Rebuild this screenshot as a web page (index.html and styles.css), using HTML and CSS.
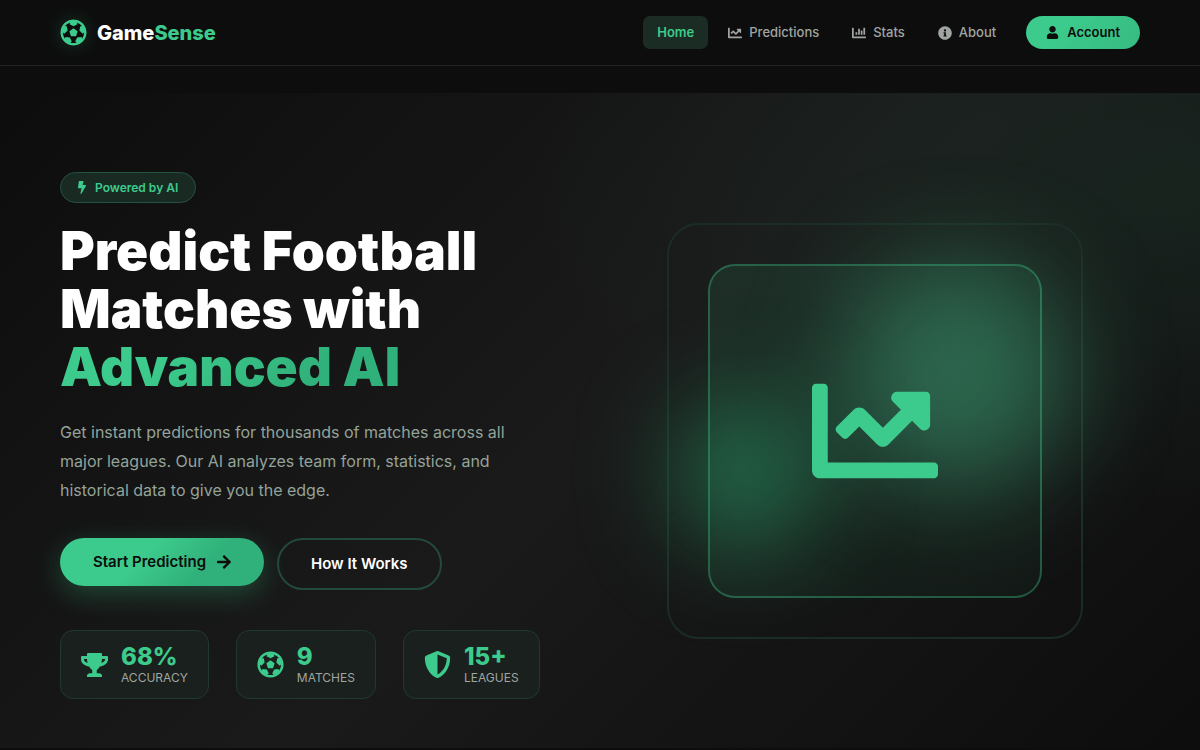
FILE: index.html
```html
<!DOCTYPE html>
<html lang="en">
<head>
<meta charset="utf-8">
<meta name="viewport" content="width=device-width, initial-scale=1">
<title>GameSense</title>
<link rel="stylesheet" href="styles.css">
</head>
<body>
<svg class="sprite" aria-hidden="true">
  <symbol id="ball" viewBox="0 0 512 512"><path d="M504 256c0 136.967-111.033 248-248 248S8 392.967 8 256 119.033 8 256 8s248 111.033 248 248zm-48 0l-.003-.282-26.064 22.741-62.679-58.5 16.454-84.355 34.303 3.072c-24.889-34.216-60.004-60.089-100.709-73.141l13.651 31.939L256 139l-74.953-41.525 13.651-31.939c-40.631 13.028-75.78 38.87-100.709 73.141l34.565-3.073 16.192 84.355-62.678 58.5-26.064-22.741-.003.282c0 43.015 13.497 83.952 38.472 117.991l7.704-33.897 85.138 10.447 36.301 77.826-29.902 17.786c40.202 13.122 84.29 13.148 124.572 0l-29.902-17.786 36.301-77.826 85.138-10.447 7.704 33.897C442.503 339.952 456 299.015 456 256zm-248.102 69.571l-29.894-91.312L256 177.732l77.996 56.527-29.622 91.312h-96.476z"/></symbol>
  <symbol id="line" viewBox="0 0 512 512"><path d="M496 384H64V80c0-8.84-7.16-16-16-16H16C7.16 64 0 71.16 0 80v336c0 17.67 14.33 32 32 32h464c8.84 0 16-7.16 16-16v-32c0-8.84-7.16-16-16-16zM464 96H345.94c-21.38 0-32.09 25.85-16.97 40.97l32.4 32.4L288 242.75l-73.37-73.37c-12.5-12.5-32.76-12.5-45.25 0l-68.69 68.69c-6.25 6.25-6.25 16.38 0 22.63l22.62 22.62c6.25 6.25 16.38 6.25 22.63 0L192 237.25l73.37 73.37c12.5 12.5 32.76 12.5 45.25 0l96-96 32.4 32.4c15.12 15.12 40.97 4.41 40.97-16.97V112c.01-8.84-7.15-16-15.99-16z"/></symbol>
  <symbol id="bars" viewBox="0 0 512 512"><path d="M332.8 320h38.4c6.4 0 12.8-6.4 12.8-12.8V172.8c0-6.4-6.4-12.8-12.8-12.8h-38.4c-6.4 0-12.8 6.4-12.8 12.8v134.4c0 6.4 6.4 12.8 12.8 12.8zm96 0h38.4c6.4 0 12.8-6.4 12.8-12.8V76.8c0-6.4-6.4-12.8-12.8-12.8h-38.4c-6.4 0-12.8 6.4-12.8 12.8v230.4c0 6.4 6.4 12.8 12.8 12.8zm-288 0h38.4c6.4 0 12.8-6.4 12.8-12.8v-70.4c0-6.4-6.4-12.8-12.8-12.8h-38.4c-6.4 0-12.8 6.4-12.8 12.8v70.4c0 6.4 6.4 12.8 12.8 12.8zm96 0h38.4c6.4 0 12.8-6.4 12.8-12.8V108.8c0-6.4-6.4-12.8-12.8-12.8h-38.4c-6.4 0-12.8 6.4-12.8 12.8v198.4c0 6.4 6.4 12.8 12.8 12.8zM496 384H64V80c0-8.84-7.16-16-16-16H16C7.16 64 0 71.16 0 80v336c0 17.67 14.33 32 32 32h464c8.84 0 16-7.16 16-16v-32c0-8.84-7.16-16-16-16z"/></symbol>
  <symbol id="info" viewBox="0 0 512 512"><path d="M256 8C119.043 8 8 119.083 8 256c0 136.997 111.043 248 248 248s248-111.003 248-248C504 119.083 392.957 8 256 8zm0 110c23.196 0 42 18.804 42 42s-18.804 42-42 42-42-18.804-42-42 18.804-42 42-42zm56 254c0 6.627-5.373 12-12 12h-88c-6.627 0-12-5.373-12-12v-24c0-6.627 5.373-12 12-12h12v-64h-12c-6.627 0-12-5.373-12-12v-24c0-6.627 5.373-12 12-12h64c6.627 0 12 5.373 12 12v100h12c6.627 0 12 5.373 12 12v24z"/></symbol>
  <symbol id="user" viewBox="0 0 448 512"><path d="M224 256c70.7 0 128-57.3 128-128S294.7 0 224 0 96 57.3 96 128s57.3 128 128 128zm89.6 32h-16.7c-22.2 10.2-46.9 16-72.9 16s-50.6-5.8-72.9-16h-16.7C60.2 288 0 348.2 0 422.4V464c0 26.5 21.5 48 48 48h352c26.5 0 48-21.5 48-48v-41.6c0-74.2-60.2-134.4-134.4-134.4z"/></symbol>
  <symbol id="bolt" viewBox="0 0 320 512"><path d="M296 160H180.6l42.6-129.8C227.2 15 215.7 0 200 0H56C44 0 33.8 8.9 32.2 20.8l-32 240C-1.7 275.2 9.5 288 24 288h118.7L96.6 482.5c-3.6 15.2 8 29.5 23.3 29.5 8.4 0 16.4-4.4 20.8-12l176-304c9.3-15.9-2.2-36-20.7-36z"/></symbol>
  <symbol id="arrow" viewBox="0 0 448 512"><path d="M190.5 66.9l22.2-22.2c9.4-9.4 24.6-9.4 33.9 0L441 239c9.4 9.4 9.4 24.6 0 33.9L246.6 467.3c-9.4 9.4-24.6 9.4-33.9 0l-22.2-22.2c-9.5-9.5-9.3-25 .4-34.3L311.4 296H24c-13.3 0-24-10.7-24-24v-32c0-13.3 10.7-24 24-24h287.4L190.9 101.2c-9.8-9.3-10-24.8-.4-34.3z"/></symbol>
  <symbol id="trophy" viewBox="0 0 576 512"><path d="M552 64H448V24c0-13.3-10.7-24-24-24H152c-13.3 0-24 10.7-24 24v40H24C10.7 64 0 74.7 0 88v56c0 35.7 22.5 72.4 61.9 100.7 31.5 22.7 69.8 37.1 110 41.7C203.3 338.5 240 360 240 360v72h-48c-35.3 0-64 20.7-64 56v12c0 6.6 5.4 12 12 12h296c6.6 0 12-5.4 12-12v-12c0-35.3-28.7-56-64-56h-48v-72s36.7-21.5 68.1-73.6c40.3-4.6 78.6-19 110-41.7 39.3-28.3 61.9-65 61.9-100.7V88c0-13.3-10.7-24-24-24zM99.3 192.8C74.9 175.2 64 155.6 64 144v-16h64.2c1 32.6 5.8 61.2 12.8 86.2-15.1-5.2-29.2-12.4-41.7-21.4zM512 144c0 16.1-17.7 36.1-35.3 48.8-12.5 9-26.7 16.2-41.8 21.4 7-25 11.8-53.6 12.8-86.2H512v16z"/></symbol>
  <symbol id="shield" viewBox="0 0 512 512"><path d="M466.5 83.7l-192-80a48.15 48.15 0 0 0-36.9 0l-192 80C27.7 91.1 16 108.6 16 128c0 198.5 114.5 335.7 221.5 380.3 11.8 4.9 25.1 4.9 36.9 0C360.1 472.6 496 349.3 496 128c0-19.4-11.7-36.9-29.5-44.3zM256.1 446.3l-.1-381 175.9 73.3c-3.3 151.4-82.1 261.1-175.8 307.7z"/></symbol>
</svg>

<header class="header">
  <a class="logo" href="#"><svg class="logo-icon" aria-hidden="true"><use href="#ball"/></svg><span>Game<span class="accent">Sense</span></span></a>
  <nav class="nav">
    <a class="nav-link active" href="#">Home</a>
    <a class="nav-link" href="#"><svg class="nav-icon" aria-hidden="true"><use href="#line"/></svg>Predictions</a>
    <a class="nav-link" href="#"><svg class="nav-icon" aria-hidden="true"><use href="#bars"/></svg>Stats</a>
    <a class="nav-link" href="#"><svg class="nav-icon" aria-hidden="true"><use href="#info"/></svg>About</a>
    <button class="account" type="button"><svg class="account-icon" aria-hidden="true"><use href="#user"/></svg>Account</button>
  </nav>
</header>

<main class="hero">
  <section class="intro">
    <div class="badge"><svg class="badge-icon" aria-hidden="true"><use href="#bolt"/></svg>Powered by AI</div>
    <h1 class="title">Predict Football Matches with <span class="title-accent">Advanced AI</span></h1>
    <p class="lead">Get instant predictions for thousands of matches across all major leagues. Our AI analyzes team form, statistics, and historical data to give you the edge.</p>
    <div class="actions">
      <a class="btn btn-primary" href="#">Start Predicting<svg class="btn-icon" aria-hidden="true"><use href="#arrow"/></svg></a>
      <a class="btn btn-outline" href="#">How It Works</a>
    </div>
    <div class="stats">
      <div class="stat"><svg class="stat-icon wide" aria-hidden="true"><use href="#trophy"/></svg><div><div class="stat-value">68%</div><div class="stat-label">Accuracy</div></div></div>
      <div class="stat"><svg class="stat-icon" aria-hidden="true"><use href="#ball"/></svg><div><div class="stat-value">9</div><div class="stat-label">Matches</div></div></div>
      <div class="stat"><svg class="stat-icon" aria-hidden="true"><use href="#shield"/></svg><div><div class="stat-value">15+</div><div class="stat-label">Leagues</div></div></div>
    </div>
  </section>
  <div class="visual">
    <div class="frame">
      <div class="glow glow-right"></div>
      <div class="glow glow-left"></div>
      <div class="card"><svg class="card-icon" role="img" aria-label="Rising chart"><use href="#line"/></svg></div>
    </div>
  </div>
</main>
</body>
</html>
```
FILE: styles.css
```css
:root {
  --green: #3ccb8c;
  --green-dark: #30b07a;
  --ink: #0d0d0d;
  --muted: #a0a5a2;
}

* {
  box-sizing: border-box;
}

body {
  margin: 0;
  background: var(--ink);
  color: #fff;
  font-family: Inter, "Liberation Sans", sans-serif;
  overflow-x: hidden;
}

a {
  color: inherit;
  text-decoration: none;
}

svg {
  fill: currentColor;
  flex: none;
}

.sprite {
  position: absolute;
  width: 0;
  height: 0;
}

.header {
  display: flex;
  align-items: center;
  justify-content: space-between;
  padding: 16px 60px;
  border-bottom: 1px solid #212322;
}

.logo {
  display: flex;
  align-items: center;
  gap: 10px;
  font-size: 20px;
  font-weight: 800;
  line-height: 24px;
}

.logo-icon {
  width: 27px;
  height: 27px;
  color: var(--green);
  border-radius: 50%;
  box-shadow: 0 0 20px rgba(62, 203, 140, 0.2);
}

.accent {
  color: var(--green);
}

.nav {
  display: flex;
  align-items: center;
  gap: 7px;
}

.nav-link {
  display: flex;
  align-items: center;
  gap: 7px;
  padding: 8px 13px;
  border-radius: 7px;
  color: var(--muted);
  font-size: 13px;
  font-weight: 500;
  line-height: 17px;
}

.nav-link.active {
  padding: 8px 14px;
  background: #1b2c24;
  color: var(--green);
  font-weight: 600;
}

.nav-icon {
  width: 14px;
  height: 14px;
}

.account {
  display: flex;
  align-items: center;
  gap: 8px;
  margin-left: 10px;
  padding: 8px 20px;
  border: 0;
  border-radius: 20px;
  background: linear-gradient(135deg, var(--green) 30%, #37ba80);
  color: var(--ink);
  font: 600 13px/17px Inter, "Liberation Sans", sans-serif;
}

.account-icon {
  width: 13px;
  height: 13px;
}

.hero {
  display: grid;
  grid-template-columns: 1fr 1fr;
  gap: 20px;
  align-items: center;
  margin-top: 27px;
  padding: 79px 60px 49px;
  background:
    radial-gradient(ellipse at 100% 15%, rgba(62, 203, 140, 0.08), transparent 40%),
    linear-gradient(135deg, #0d0d0d, #1a1a1a 50%, #0d0d0d);
}

.badge {
  display: flex;
  width: fit-content;
  align-items: center;
  gap: 9px;
  padding: 7px 17px;
  border: 1px solid #265341;
  border-radius: 16px;
  background: #182a22;
  color: var(--green);
  font-size: 12px;
  font-weight: 600;
  line-height: 15px;
}

.badge-icon {
  width: 8px;
  height: 13px;
}

.title {
  max-width: 480px;
  margin: 19px 0 22px;
  font-size: 53px;
  font-weight: 900;
  line-height: 58px;
}

.title-accent {
  display: block;
  width: fit-content;
  background: linear-gradient(135deg, var(--green) 30%, var(--green-dark) 75%);
  background-clip: text;
  color: transparent;
}

.lead {
  max-width: 480px;
  margin: 0 0 33px;
  color: #93a39a;
  font-size: 16px;
  line-height: 29px;
}

.actions {
  display: flex;
  align-items: flex-start;
  gap: 13px;
  margin-bottom: 40px;
}

.btn {
  display: flex;
  align-items: center;
  gap: 11px;
  padding: 14px 33px;
  border-radius: 26px;
  font-size: 15px;
  font-weight: 600;
  line-height: 20px;
}

.btn-primary {
  background: linear-gradient(135deg, var(--green) 40%, var(--green-dark) 70%);
  box-shadow: 0 8px 28px rgba(62, 203, 140, 0.28);
  color: var(--ink);
}

.btn-outline {
  padding: 14px 32px;
  border: 2px solid #23493a;
}

.btn-icon {
  width: 14px;
  height: 16px;
}

.stats {
  display: flex;
  gap: 27px;
}

.stat {
  display: flex;
  align-items: center;
  gap: 13px;
  padding: 12px 20px;
  border: 1px solid #20392e;
  border-radius: 13px;
  background: #1a201d;
}

.stat-icon {
  width: 27px;
  height: 27px;
  color: var(--green);
}

.stat-icon.wide {
  height: 24px;
}

.stat-value {
  color: var(--green);
  font-size: 24px;
  font-weight: 800;
  line-height: 27px;
}

.stat-label {
  color: var(--muted);
  font-size: 12px;
  line-height: 16px;
  text-transform: uppercase;
}

.visual {
  display: flex;
  justify-content: center;
  margin-bottom: 9px;
}

.frame {
  position: relative;
  width: 100%;
  max-width: 416px;
  aspect-ratio: 1;
  padding: 39px;
  border: 2px solid #1b2c25;
  border-radius: 32px;
}

.glow {
  position: absolute;
  border-radius: 50%;
  filter: blur(50px);
}

.glow-right {
  top: 9%;
  right: 2%;
  width: 56%;
  height: 56%;
  background: rgba(72, 190, 140, 0.42);
}

.glow-left {
  top: 43%;
  left: 2%;
  width: 34%;
  height: 34%;
  background: rgba(46, 190, 125, 0.5);
}

.card {
  position: relative;
  display: flex;
  align-items: center;
  justify-content: center;
  height: 100%;
  border: 2px solid rgba(62, 203, 140, 0.35);
  border-radius: 27px;
  background: linear-gradient(135deg, rgba(62, 203, 140, 0.1), rgba(62, 203, 140, 0.04));
}

.card-icon {
  width: 126px;
  height: 126px;
  color: var(--green);
}
```
